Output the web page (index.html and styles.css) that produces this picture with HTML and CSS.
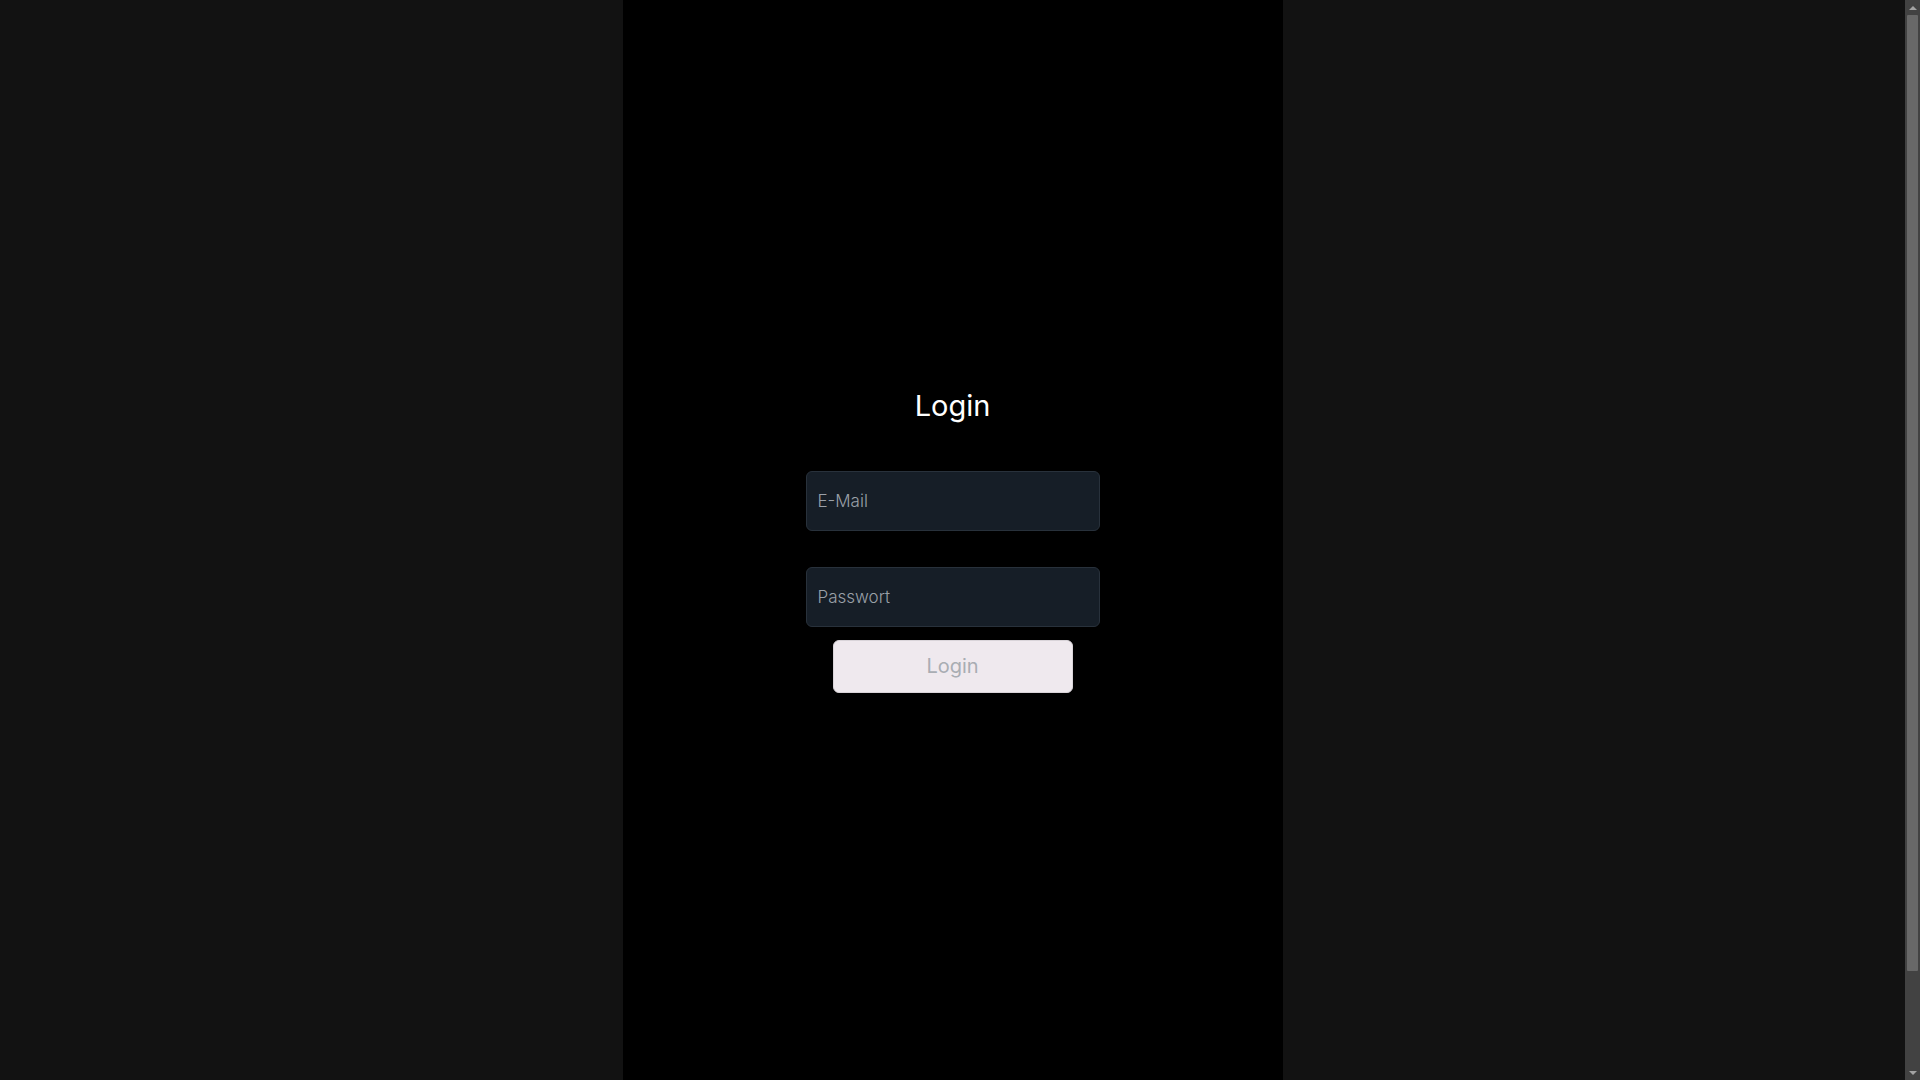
FILE: index.html
```html
<!DOCTYPE html>
<html lang="de">
<head>
<meta charset="utf-8">
<title>Login</title>
<link rel="stylesheet" href="styles.css">
</head>
<body>
<div class="page">
  <main class="column">
    <h1 class="title">Login</h1>
    <form class="form">
      <input class="field" type="email" placeholder="E-Mail">
      <input class="field" type="password" placeholder="Passwort">
      <button class="btn" type="button" disabled>Login</button>
    </form>
  </main>
</div>
<div class="tail"></div>
<div class="scrollbar" aria-hidden="true">
  <div class="sb-arrow sb-up"></div>
  <div class="sb-track"><div class="sb-thumb"></div></div>
  <div class="sb-arrow sb-down"></div>
</div>
</body>
</html>
```

FILE: styles.css
```css
html, body {
  margin: 0;
  padding: 0;
  background: #121212;
  font-family: Inter, "Noto Sans", sans-serif;
}
.page {
  display: flex;
  justify-content: center;
  padding-right: 15px;
}
.column {
  width: 660px;
  height: 100vh;
  background: #000;
  display: flex;
  flex-direction: column;
  align-items: center;
  justify-content: center;
}
.tail {
  height: 106px;
}
.title {
  margin: 0 0 48px;
  font-size: 29px;
  line-height: 35px;
  font-weight: 400;
  color: #fff;
}
.form {
  display: flex;
  flex-direction: column;
  align-items: center;
}
.field {
  box-sizing: border-box;
  width: 294px;
  height: 60px;
  margin: 0 0 36px;
  padding: 0 11px;
  background: #161e27;
  border: 1px solid #28313b;
  border-radius: 6px;
  color: #e5e7eb;
  font-family: Inter, "Noto Sans", sans-serif;
  font-size: 17px;
  font-weight: 300;
  outline: none;
}
.field:nth-of-type(2) {
  margin-bottom: 13px;
}
.field::placeholder {
  color: #9aa0a8;
}
.btn {
  box-sizing: border-box;
  width: 240px;
  height: 53px;
  background: #efe9ee;
  border: 1px solid #d9d4d9;
  border-radius: 6px;
  color: #a9adb3;
  font-family: Inter, "Noto Sans", sans-serif;
  font-size: 20px;
  cursor: default;
}
.scrollbar {
  position: fixed;
  top: 0;
  right: 0;
  width: 15px;
  height: 100vh;
  background: #424242;
  display: flex;
  flex-direction: column;
}
.sb-arrow {
  height: 15px;
  display: flex;
  align-items: center;
  justify-content: center;
}
.sb-up::before {
  content: "";
  border-left: 4px solid transparent;
  border-right: 4px solid transparent;
  border-bottom: 4px solid #a3a3a3;
}
.sb-down::before {
  content: "";
  border-left: 4px solid transparent;
  border-right: 4px solid transparent;
  border-top: 4px solid #a3a3a3;
}
.sb-track {
  flex: 1;
  padding: 0 2px;
}
.sb-thumb {
  height: 956px;
  background: #686868;
  border-radius: 1px;
}
```
